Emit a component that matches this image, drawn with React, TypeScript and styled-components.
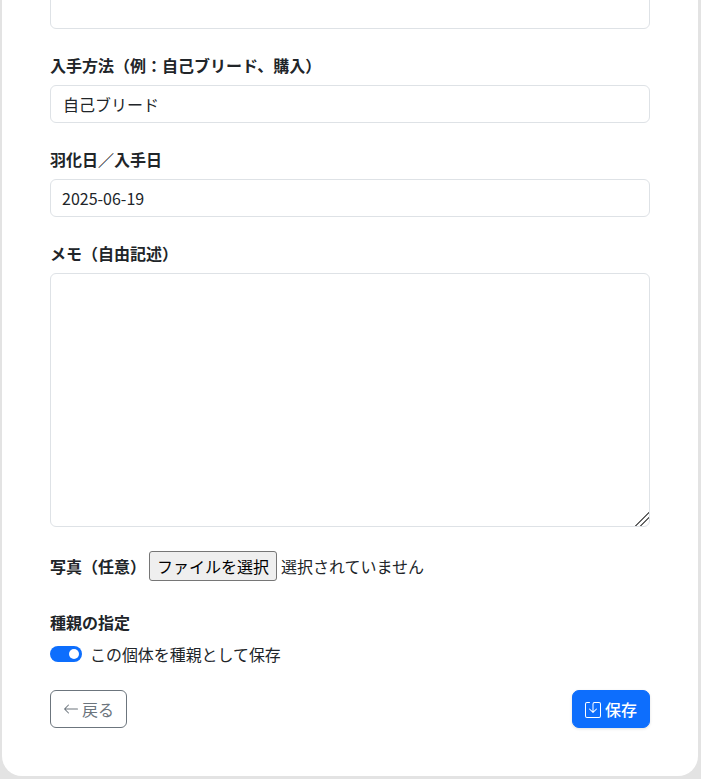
import React from "react";
import styled, { createGlobalStyle } from "styled-components";
import { BsArrowLeft, BsSave } from "react-icons/bs";

const Global = createGlobalStyle`
  html, body { margin: 0; padding: 0; height: 779px; overflow: hidden; background: #e3e3e3; }
  body { font-family: "Noto Sans CJK JP", "Noto Sans", sans-serif; font-size: 16px; line-height: 24px; color: #212529; }
  * { box-sizing: border-box; }
`;
const Viewport = styled.div`
  height: 779px;
  overflow: hidden;
  padding: 0 3px 0 2px;
`;
const Card = styled.form`
  margin-top: -100px;
  height: 876px;
  background: #fff;
  border-radius: 20px;
  padding: 0 48px;
  display: flex;
  flex-direction: column;
`;
const Field = styled.div`
  margin-top: 24px;
  display: flex;
  flex-direction: column;
`;
const Label = styled.label`
  font-weight: 700;
  font-size: 16px;
  line-height: 24px;
  margin-bottom: 8px;
`;
const Input = styled.input<{ $date?: boolean }>`
  display: block;
  width: 100%;
  height: 38px;
  border: 1px solid #dee2e6;
  border-radius: 6px;
  padding: 6px 12px 6px ${(p) => (p.$date ? "11px" : "12px")};
  font: inherit;
  color: #212529;
  background: #fff;
  outline: none;
`;
const TopInput = styled(Input)`
  margin-top: 91px;
`;
const Memo = styled.textarea`
  display: block;
  width: 100%;
  height: 254px;
  border: 1px solid #dee2e6;
  border-radius: 6px;
  padding: 6px 12px;
  font: inherit;
  color: #212529;
  background: #fff;
  outline: none;
  resize: vertical;
  &::-webkit-resizer {
    background: linear-gradient(
      135deg,
      transparent 52%,
      #666 52%,
      #666 58%,
      transparent 58%,
      transparent 69%,
      #666 69%,
      #666 75%,
      transparent 75%
    );
  }
`;
const FileRow = styled.div`
  margin-top: 24px;
  height: 30px;
  display: flex;
  align-items: center;
`;
const FileLabel = styled.span`
  font-weight: 700;
  width: 99px;
`;
const FileButton = styled.button`
  width: 128px;
  height: 30px;
  padding: 0;
  margin-right: 4px;
  background: #efefef;
  border: 1px solid #767676;
  border-radius: 3px;
  font: inherit;
  color: #000;
`;
const SwitchGroup = styled.div`
  margin-top: 29px;
  display: flex;
  flex-direction: column;
`;
const GroupLabel = styled.div`
  font-weight: 700;
  line-height: 24px;
  margin-bottom: 8px;
`;
const SwitchRow = styled.div`
  display: flex;
  align-items: center;
  height: 24px;
  gap: 8px;
`;
const SwitchText = styled.span`
  font-size: 15.95px;
`;
const Track = styled.span`
  width: 32px;
  height: 16px;
  border-radius: 8px;
  background: #0d6efd;
  display: flex;
  align-items: center;
  justify-content: flex-end;
  padding-right: 3px;
`;
const Knob = styled.span`
  width: 10px;
  height: 10px;
  border-radius: 50%;
  background: #fff;
`;
const Actions = styled.div`
  margin-top: 24px;
  display: flex;
  justify-content: space-between;
`;
const BackButton = styled.button`
  height: 38px;
  width: 77px;
  background: #fff;
  border: 1px solid #6c757d;
  border-radius: 6px;
  color: #6c757d;
  font: inherit;
  padding: 0;
  display: flex;
  align-items: center;
  justify-content: center;
  gap: 3px;
`;
const SaveButton = styled.button`
  height: 38px;
  width: 78px;
  background: #0d6efd;
  border: 1px solid #0d6efd;
  border-radius: 7px;
  color: #fff;
  font: inherit;
  font-weight: 500;
  padding: 0;
  display: flex;
  align-items: center;
  justify-content: center;
  gap: 4px;
  box-shadow: 0 1px 3px rgba(0, 0, 0, 0.12);
  svg {
    margin-top: 2px;
  }
`;

export default function App() {
  return (
    <Viewport>
      <Global />
      <Card onSubmit={(e) => e.preventDefault()}>
        <TopInput type="text" />
        <Field>
          <Label>入手方法（例：自己ブリード、購入）</Label>
          <Input type="text" defaultValue="自己ブリード" />
        </Field>
        <Field>
          <Label>羽化日／入手日</Label>
          <Input $date type="text" defaultValue="2025-06-19" />
        </Field>
        <Field>
          <Label>メモ（自由記述）</Label>
          <Memo />
        </Field>
        <FileRow>
          <FileLabel>写真（任意）</FileLabel>
          <FileButton type="button">ファイルを選択</FileButton>
          <span>選択されていません</span>
        </FileRow>
        <SwitchGroup>
          <GroupLabel>種親の指定</GroupLabel>
          <SwitchRow>
            <Track><Knob /></Track>
            <SwitchText>この個体を種親として保存</SwitchText>
          </SwitchRow>
        </SwitchGroup>
        <Actions>
          <BackButton type="button"><BsArrowLeft size={16} />戻る</BackButton>
          <SaveButton type="submit"><BsSave size={16} />保存</SaveButton>
        </Actions>
      </Card>
    </Viewport>
  );
}
